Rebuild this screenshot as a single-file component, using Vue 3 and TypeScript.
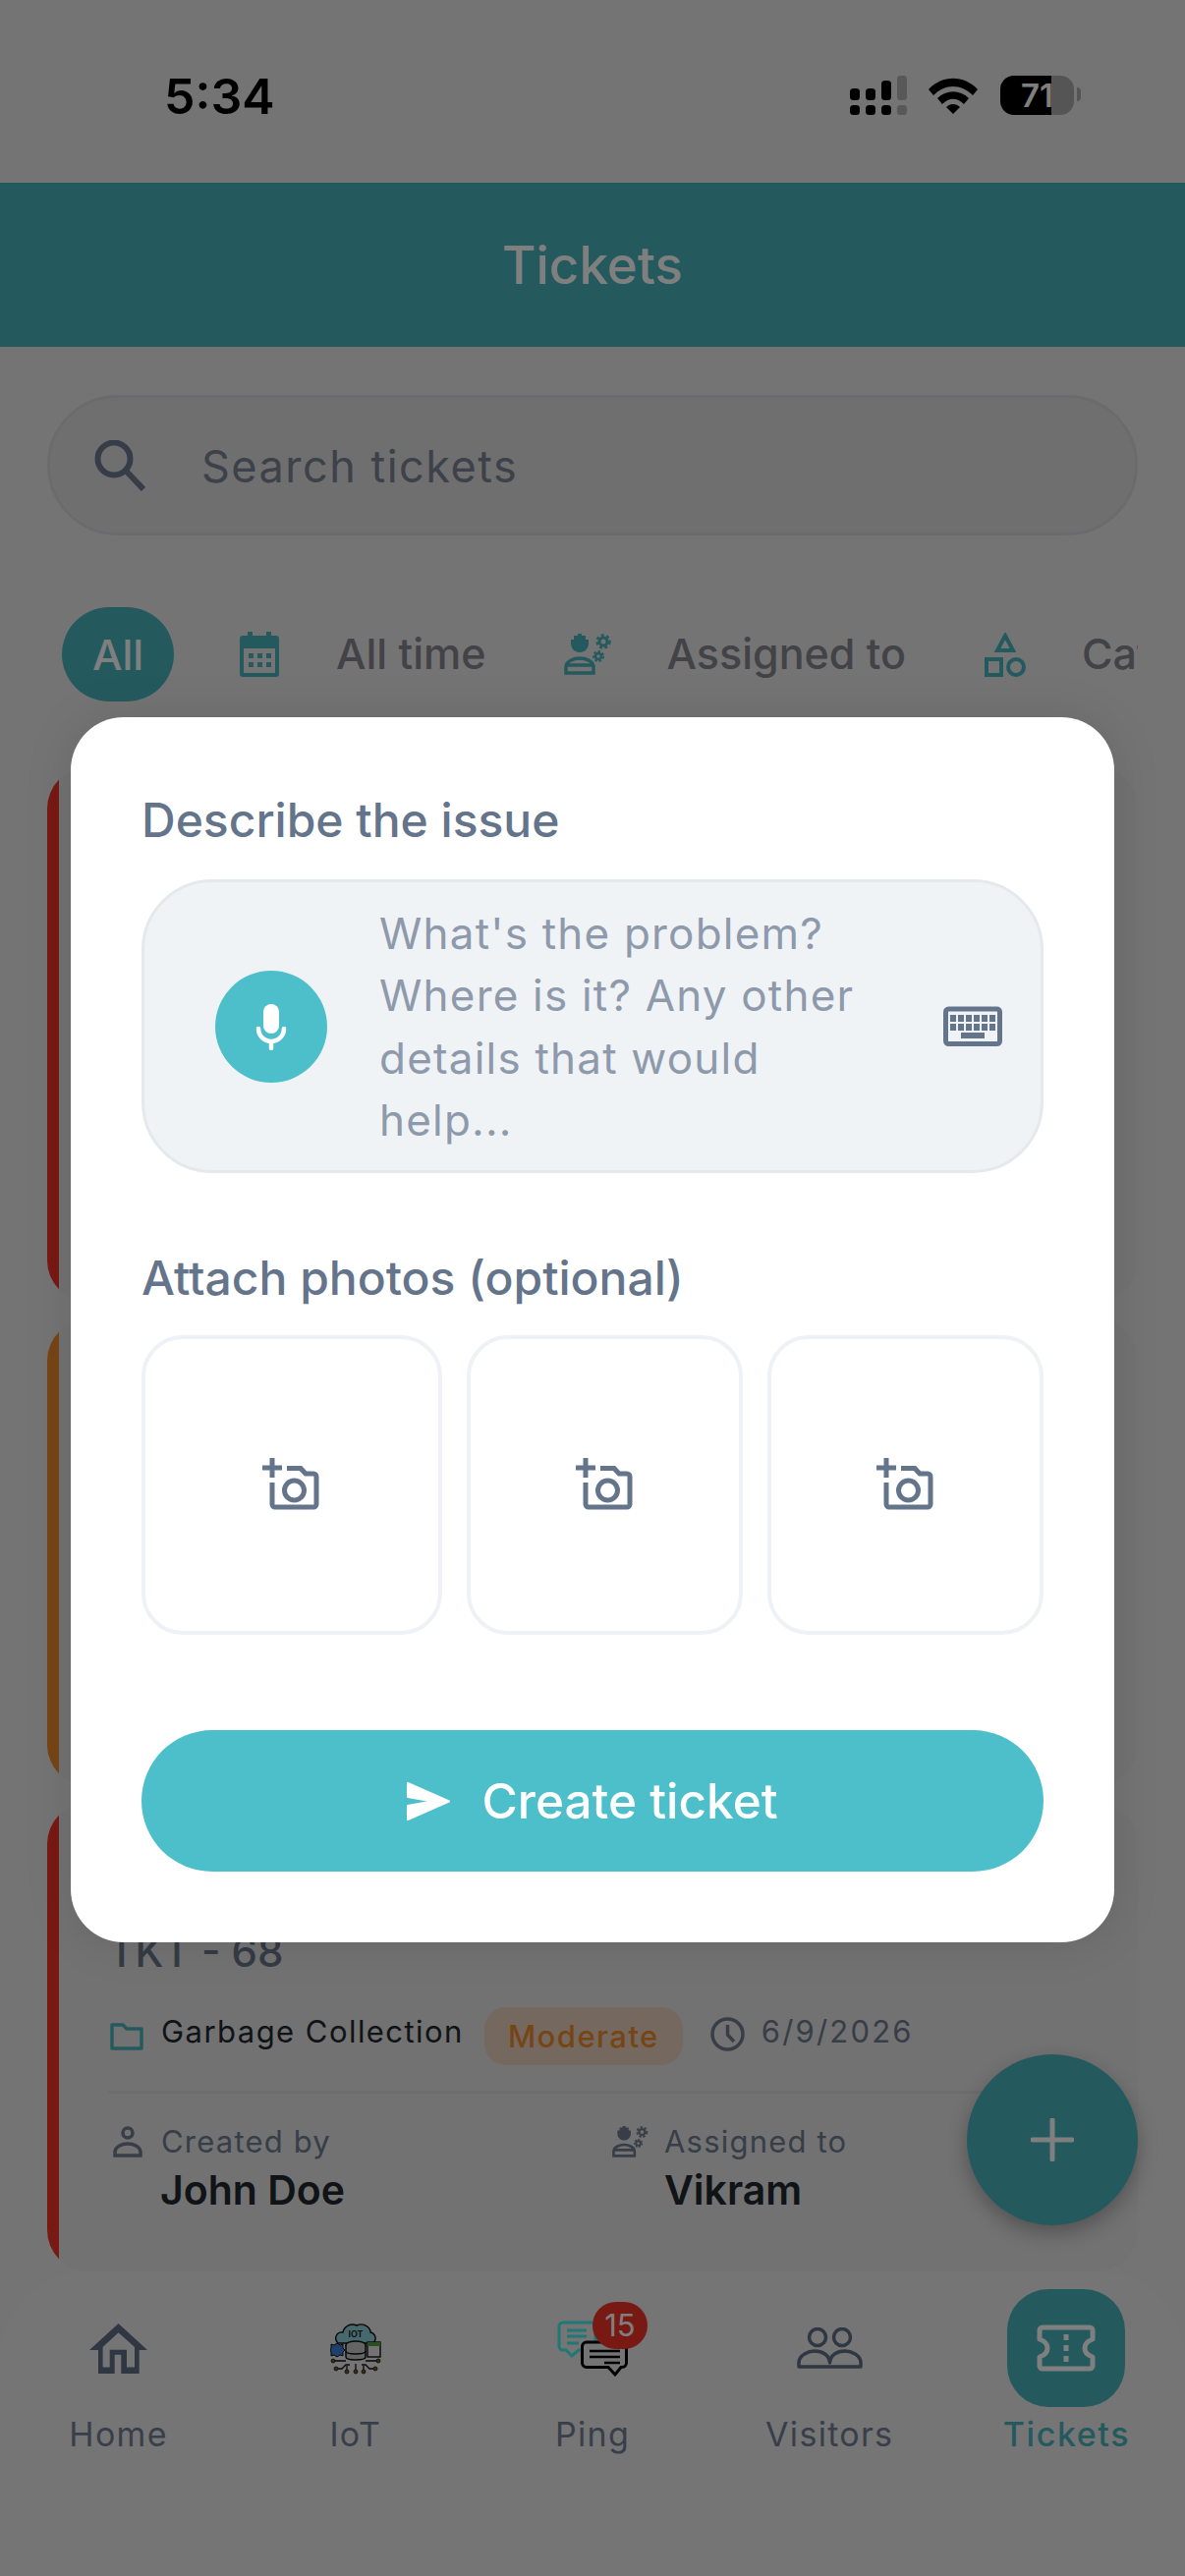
<script setup lang="ts">
const photoSlots = [1, 2, 3]

const navItems = [
  { key: 'home', label: 'Home' },
  { key: 'iot', label: 'IoT' },
  { key: 'ping', label: 'Ping' },
  { key: 'visitors', label: 'Visitors' },
  { key: 'tickets', label: 'Tickets' },
]
</script>

<template>
  <div class="page">
    <div class="status-bar">
      <span class="clock">5:34</span>
      <div class="status-icons">
        <svg width="58" height="40" viewBox="0 0 58 40">
          <rect x="0" y="13" width="10" height="12" rx="3.5" />
          <rect x="16" y="13" width="10" height="12" rx="3.5" />
          <rect x="32" y="5" width="10" height="20" rx="3.5" />
          <rect x="48" y="0" width="10" height="25" rx="3.5" fill="#b0b0b0" />
          <rect x="0" y="30" width="10" height="10" rx="3.5" />
          <rect x="16" y="30" width="10" height="10" rx="3.5" />
          <rect x="32" y="30" width="10" height="10" rx="3.5" />
          <rect x="48" y="30" width="10" height="10" rx="3.5" fill="#b0b0b0" />
        </svg>
        <svg width="50" height="37" viewBox="0 0 50 37">
          <path d="M0 12 C14 -3 36 -3 50 12 L45 18 C33 6 17 6 5 18 Z" />
          <path d="M9 21 C18 12 32 12 41 21 L36 27 C29 20 21 20 14 27 Z" />
          <path d="M18 30 C22 26 28 26 32 30 L25 37 Z" />
        </svg>
        <div class="battery">
          <span class="battery-level">71</span>
          <i class="battery-cap"></i>
        </div>
      </div>
    </div>

    <header class="app-header">Tickets</header>

    <div class="search">
      <svg width="52" height="52" viewBox="0 0 52 52" fill="none" stroke="#6f7b90" stroke-width="6">
        <circle cx="20" cy="19" r="16.5" />
        <path d="M32 31 L50 50" />
      </svg>
      <span class="search-text">Search tickets</span>
    </div>

    <div class="filters">
      <span class="chip-all">All</span>
      <div class="filter filter-time">
        <svg width="40" height="46" viewBox="0 0 40 46">
          <g fill="#48b4bc">
            <rect x="8" y="0" width="5" height="7" />
            <rect x="27" y="0" width="5" height="7" />
            <path fill-rule="evenodd" d="M3 4H37a3 3 0 0 1 3 3V43a3 3 0 0 1-3 3H3a3 3 0 0 1-3-3V7a3 3 0 0 1 3-3ZM4 17V42H36V17Z" />
            <rect x="9" y="22" width="5" height="5" />
            <rect x="18" y="22" width="5" height="5" />
            <rect x="27" y="22" width="5" height="5" />
            <rect x="9" y="31" width="5" height="5" />
            <rect x="18" y="31" width="5" height="5" />
            <rect x="27" y="31" width="5" height="5" />
          </g>
        </svg>
        <span>All time</span>
      </div>
      <div class="filter filter-assigned">
        <svg width="50" height="42" viewBox="0 0 50 42" fill="none" stroke="#48b4bc">
          <path d="M7 10 V6 L10 6 V2 H14 V0 H18 V2 H22 V6 H25 V10 C25 15 21 19 16 19 C11 19 7 15 7 10 Z" fill="#48b4bc" stroke="none" />
          <path d="M2 40 V34 C2 28 10 25 16 25 C22 25 30 28 30 34 V40 Z M2 32 H30" stroke-width="3.5" />
          <circle cx="40" cy="8" r="4" stroke-width="3" />
          <circle cx="40" cy="8" r="6.5" stroke-width="2.5" stroke-dasharray="3 2.5" />
          <circle cx="35" cy="23" r="3" stroke-width="2.5" />
          <circle cx="35" cy="23" r="5" stroke-width="2" stroke-dasharray="2.5 2" />
        </svg>
        <span>Assigned to</span>
      </div>
      <div class="filter filter-category">
        <svg width="42" height="45" viewBox="0 0 42 45" fill="none" stroke="#48b4bc" stroke-width="4">
          <path d="M21 3 L29 18 H13 Z" />
          <rect x="2" y="27" width="15" height="16" />
          <circle cx="32" cy="35" r="8" />
        </svg>
        <span>Category</span>
      </div>
    </div>

    <div class="ticket-list">
      <div class="ticket ticket-critical ticket-one"></div>
      <div class="ticket ticket-high ticket-two"></div>
      <div class="ticket ticket-critical ticket-three">
        <div class="ticket-id">TKT - 68</div>
        <div class="ticket-meta">
          <svg width="34" height="28" viewBox="0 0 34 28" fill="none" stroke="#48b4bc" stroke-width="3.5">
            <path d="M2 2 H13 L17 6 H32 V26 H2 Z" stroke-linejoin="round" />
          </svg>
          <span class="meta-text">Garbage Collection</span>
          <span class="severity">Moderate</span>
          <svg class="meta-clock" width="35" height="35" viewBox="0 0 35 35" fill="none" stroke="#6f7c90" stroke-width="3.5">
            <circle cx="17.5" cy="17.5" r="15.5" />
            <path d="M17.5 8 V18 L24 25" />
          </svg>
          <span class="meta-date">6/9/2026</span>
        </div>
        <div class="ticket-people">
          <div>
            <div class="person-label">
              <svg width="32" height="32" viewBox="0 0 32 32" fill="none" stroke="#6f7c90" stroke-width="3.5">
                <circle cx="16" cy="7" r="5" />
                <path d="M3 30 V27 C3 21 10 18 16 18 C22 18 29 21 29 27 V30 Z" />
              </svg>
              <span>Created by</span>
            </div>
            <div class="person-name">John Doe</div>
          </div>
          <div>
            <div class="person-label person-label-assigned">
              <svg width="38" height="34" viewBox="0 0 50 42" fill="none" stroke="#6f7c90">
                <path d="M7 10 V6 L10 6 V2 H14 V0 H18 V2 H22 V6 H25 V10 C25 15 21 19 16 19 C11 19 7 15 7 10 Z" fill="#6f7c90" stroke="none" />
                <path d="M2 40 V34 C2 28 10 25 16 25 C22 25 30 28 30 34 V40 Z M2 32 H30" stroke-width="3.5" />
                <circle cx="40" cy="8" r="4" stroke-width="3" />
                <circle cx="40" cy="8" r="6.5" stroke-width="2.5" stroke-dasharray="3 2.5" />
                <circle cx="35" cy="23" r="3" stroke-width="2.5" />
                <circle cx="35" cy="23" r="5" stroke-width="2" stroke-dasharray="2.5 2" />
              </svg>
              <span>Assigned to</span>
            </div>
            <div class="person-name">Vikram</div>
          </div>
        </div>
      </div>
    </div>

    <nav class="bottom-nav">
      <div v-for="item in navItems" :key="item.key" class="nav-item" :class="{ 'nav-active': item.key === 'tickets' }">
        <div class="nav-icon">
          <svg v-if="item.key === 'home'" width="59" height="51" viewBox="0 0 59 51">
            <path fill="#5f6e86" fill-rule="evenodd" d="M29.5 0 L59 27 H50.7 V51 H32.3 V31.7 H25.7 V51 H9 V27 H0 Z M29.5 9.3 L13.6 24 V44.4 H20.7 V26.7 H38 V44.4 H46 V24 Z" />
          </svg>

          <svg v-else-if="item.key === 'iot'" width="52" height="53" viewBox="0 0 52 53">
            <path d="M8 21 C3 16 7 9 13 10 C14 4 21 0 27 3 C33 0 41 4 41 10 C46 11 48 17 44 21 Z" fill="#8fd0da" stroke="#111" stroke-width="1.4" />
            <text x="26" y="15" text-anchor="middle" class="iot-label">IOT</text>
            <path d="M7 21 L10 23 L13 22 L13 26 L15 28 L13 30 L13 34 L10 33 L7 35 L4 33 L1 34 L1 30 L0 28 L1 26 L1 22 L4 23 Z" fill="#3f7fd8" stroke="#111" stroke-width="1" />
            <ellipse cx="26" cy="23" rx="10" ry="4" fill="#c9c9c9" stroke="#111" stroke-width="1.5" />
            <path d="M16 23 V35 C16 39 36 39 36 35 V23" fill="#c9c9c9" stroke="#111" stroke-width="1.5" />
            <path d="M16 29 C16 33 36 33 36 29" fill="none" stroke="#111" stroke-width="1.5" />
            <rect x="38" y="20" width="13" height="15" fill="#e6e6e6" stroke="#111" stroke-width="1.4" />
            <rect x="38" y="20" width="13" height="4" fill="#5b9a45" />
            <g fill="none" stroke="#111" stroke-width="1.3">
              <path d="M4 39 H16 M36 39 H48 M8 47 H12 L16 43 H20 M44 47 H40 L36 43 H32 M17 44 V48 M26 42 V48 M34 44 V48" />
            </g>
            <g fill="#7a5a20" stroke="#111" stroke-width="0.8">
              <circle cx="3" cy="39" r="2" />
              <circle cx="49" cy="39" r="2" />
              <circle cx="6" cy="47" r="2" />
              <circle cx="46" cy="47" r="2" />
              <circle cx="17" cy="50" r="2" />
              <circle cx="26" cy="50" r="2" />
              <circle cx="34" cy="50" r="2" />
            </g>
          </svg>

          <div v-else-if="item.key === 'ping'" class="ping-icon">
            <svg width="72" height="57" viewBox="0 0 72 57" fill="none">
              <path d="M6 2 H35 A4 4 0 0 1 39 6 V26 A4 4 0 0 1 35 30 H22 L15 36 L9 30 H6 A4 4 0 0 1 2 26 V6 A4 4 0 0 1 6 2 Z" stroke="#3cf0ea" stroke-width="3" />
              <path d="M10 10 H30 M10 16 H30 M10 23 H22" stroke="#3cf0ea" stroke-width="3" />
              <path d="M30 22 H66 A4.5 4.5 0 0 1 70.5 26.5 V43 A4.5 4.5 0 0 1 66 47.5 H65 L59 55 L52 47.5 H30 A4.5 4.5 0 0 1 25.5 43 V26.5 A4.5 4.5 0 0 1 30 22 Z" fill="#e8e8e8" stroke="#000" stroke-width="3" />
              <path d="M33 31 H64 M33 37 H64 M48 43 H64" stroke="#000" stroke-width="2.6" />
            </svg>
            <span class="ping-badge">15</span>
          </div>

          <svg v-else-if="item.key === 'visitors'" width="67" height="42" viewBox="0 0 67 42" fill="none" stroke="#5f6e86" stroke-width="3.5">
            <circle cx="21" cy="10" r="8.5" />
            <circle cx="46" cy="10" r="8.5" />
            <path d="M2 40 V36 C2 28 12 24 18 24 C26 24 33 28 33.5 36 C34 28 41 24 49 24 C55 24 65 28 65 36 V40 Z" stroke-linejoin="round" />
          </svg>

          <svg v-else width="60" height="48" viewBox="0 0 60 48" fill="none" stroke="#fff" stroke-width="5">
            <path d="M6 3 H54 A3 3 0 0 1 57 6 V15 C51 17 49 21 49 24 C49 27 51 31 57 33 V42 A3 3 0 0 1 54 45 H6 A3 3 0 0 1 3 42 V33 C9 31 11 27 11 24 C11 21 9 17 3 15 V6 A3 3 0 0 1 6 3 Z" stroke-linejoin="round" />
            <path d="M30 10 V16 M30 21 V27 M30 32 V38" stroke-width="5" />
          </svg>
        </div>
        <span class="nav-label">{{ item.label }}</span>
      </div>
    </nav>

    <button class="fab" type="button" aria-label="New ticket">
      <svg width="44" height="44" viewBox="0 0 44 44" stroke="#fff" stroke-width="5" stroke-linecap="round">
        <path d="M22 2 V42 M2 22 H42" />
      </svg>
    </button>

    <div class="scrim">
      <div class="sheet">
        <h2 class="sheet-title">Describe the issue</h2>
        <div class="describe-box">
          <span class="mic-btn">
            <svg width="34" height="50" viewBox="0 0 34 50" fill="none" stroke="#fff" stroke-width="4.5" stroke-linecap="round">
              <rect x="9" y="2" width="16" height="30" rx="8" fill="#fff" stroke="none" />
              <path d="M4 27 A13 13 0 0 0 30 27 M17 40 V47" />
            </svg>
          </span>
          <p class="describe-text">What's the problem? Where is it? Any other details that would help...</p>
          <svg class="keyboard" width="60" height="41" viewBox="0 0 60 41" fill="#64748b">
            <rect x="2.5" y="3" width="55" height="35.5" rx="3" fill="none" stroke="#64748b" stroke-width="5" />
            <rect x="7" y="9" width="6" height="7" />
            <rect x="15" y="9" width="6" height="7" />
            <rect x="23" y="9" width="6" height="7" />
            <rect x="31" y="9" width="6" height="7" />
            <rect x="39" y="9" width="6" height="7" />
            <rect x="47" y="9" width="6" height="7" />
            <rect x="7" y="18" width="6" height="7" />
            <rect x="15" y="18" width="6" height="7" />
            <rect x="23" y="18" width="6" height="7" />
            <rect x="31" y="18" width="6" height="7" />
            <rect x="39" y="18" width="6" height="7" />
            <rect x="47" y="18" width="6" height="7" />
            <rect x="18" y="27" width="24" height="6" />
          </svg>
        </div>

        <h2 class="sheet-title attach-title">Attach photos (optional)</h2>
        <div class="photo-grid">
          <div v-for="slot in photoSlots" :key="slot" class="photo-slot">
            <svg width="60" height="56" viewBox="0 0 60 56" fill="none" stroke="#64748b" stroke-width="5">
              <path d="M0 10 H20 M10 0 V20" />
              <path d="M25 10.5 H39 L44 16 H52 A3 3 0 0 1 55 19 V47 A3 3 0 0 1 52 50 H13 A3 3 0 0 1 10 47 V25" />
              <circle cx="32.5" cy="33" r="10" />
            </svg>
          </div>
        </div>

        <button class="create-btn" type="button">
          <svg width="44" height="39" viewBox="0 0 44 39" fill="#fff" stroke="#fff" stroke-width="2" stroke-linejoin="round">
            <path d="M1 1 L43 19.5 L1 38 V24 L26 19.5 L1 15 Z" />
          </svg>
          <span>Create ticket</span>
        </button>
      </div>
    </div>
  </div>
</template>

<style scoped>
.page {
  position: relative;
  display: flex;
  flex-direction: column;
  width: 1206px;
  height: 2622px;
  overflow: hidden;
  background: #e8e8e8;
  font-family: Inter, "Noto Sans", sans-serif;
}

.status-bar {
  display: flex;
  align-items: center;
  justify-content: space-between;
  height: 186px;
  padding: 8px 113px 0 167px;
  box-sizing: border-box;
  flex-shrink: 0;
}

.clock {
  margin-top: 2px;
  font-size: 50px;
  font-weight: 600;
  color: #000;
}

.status-icons {
  display: flex;
  align-items: center;
  gap: 22px;
}

.battery {
  position: relative;
  width: 75px;
  height: 40px;
  margin-left: 1px;
  border-radius: 14px;
  background: linear-gradient(90deg, #000 70%, #aaa 70%);
  color: #fff;
  font-size: 33px;
  font-weight: 600;
  line-height: 40px;
  text-align: center;
}

.battery-cap {
  position: absolute;
  top: 12px;
  right: -7px;
  width: 4px;
  height: 14px;
  border-radius: 0 4px 4px 0;
  background: #aaa;
}

.app-header {
  display: flex;
  align-items: center;
  justify-content: center;
  height: 167px;
  flex-shrink: 0;
  background: #48b4bc;
  color: #fff;
  font-size: 53px;
  font-weight: 500;
}

.search {
  display: flex;
  align-items: center;
  gap: 57px;
  height: 143px;
  margin: 49px 48px 0;
  padding-left: 45px;
  box-sizing: border-box;
  flex-shrink: 0;
  border: 3px solid #d6d7da;
  border-radius: 72px;
  background: #dedfe1;
  color: #7a8292;
  font-size: 45px;
  letter-spacing: 1.5px;
}

.search-text {
  margin-top: 2px;
}

.filters {
  display: flex;
  align-items: center;
  height: 96px;
  margin: 73px 48px 0 63px;
  overflow: hidden;
  flex-shrink: 0;
  white-space: nowrap;
  color: #84848f;
  font-size: 43px;
  font-weight: 500;
}

.chip-all {
  display: flex;
  align-items: center;
  justify-content: center;
  width: 114px;
  height: 96px;
  flex-shrink: 0;
  border-radius: 48px;
  background: #48b4bc;
  color: #fff;
}

.filter {
  display: flex;
  align-items: center;
  flex-shrink: 0;
}

.filter span {
  margin-bottom: 2px;
}

.filter-time {
  gap: 58px;
  margin-left: 67px;
}

.filter-assigned {
  gap: 55px;
  margin-left: 79px;
}

.filter-category {
  gap: 57px;
  margin-left: 80px;
}

.ticket-list {
  display: flex;
  flex-direction: column;
  gap: 17.5px;
  flex: 1;
  min-height: 0;
  margin: 67px 48px 0;
}

.ticket {
  flex-shrink: 0;
  box-sizing: border-box;
  border-radius: 42px;
}

.ticket-critical {
  background: linear-gradient(90deg, #f03228 12px, #e4e4e4 12px);
}

.ticket-high {
  background: linear-gradient(90deg, #ec8a2e 12px, #e4e4e4 12px);
}

.ticket-one {
  height: 544px;
}

.ticket-two {
  height: 475px;
}

.ticket-three {
  height: 477px;
  padding: 125px 0 0 62px;
}

.ticket-id {
  color: #6a7688;
  font-size: 42px;
  font-weight: 500;
  line-height: 54px;
}

.ticket-meta {
  display: flex;
  align-items: center;
  height: 59px;
  margin-top: 29px;
  margin-right: 150px;
  padding-left: 2px;
  color: #22282f;
  font-size: 31px;
  letter-spacing: 1.45px;
}

.meta-text {
  margin-left: 18px;
  margin-bottom: 10px;
}

.severity {
  margin-left: 21px;
  padding: 0 24px;
  height: 59px;
  border-radius: 22px;
  background: #ead0bf;
  color: #ea8a2c;
  line-height: 59px;
  font-weight: 500;
}

.meta-clock {
  margin-left: 28px;
  margin-bottom: 4px;
}

.meta-date {
  margin-left: 17px;
  margin-bottom: 10px;
  color: #6f7c90;
  letter-spacing: 2.2px;
}

.ticket-people {
  display: grid;
  grid-template-columns: 513px 1fr;
  margin-top: 26px;
  margin-right: 150px;
  padding-top: 28px;
  border-top: 3px solid #dadada;
}

.person-label {
  display: flex;
  align-items: center;
  gap: 18px;
  padding-left: 4px;
  color: #6f7c90;
  font-size: 31px;
  letter-spacing: 1.2px;
  line-height: 42px;
}

.person-label-assigned {
  gap: 15px;
  padding-left: 0;
}

.person-name {
  margin-top: 1px;
  padding-left: 53px;
  color: #22282f;
  font-size: 41px;
  font-weight: 600;
  line-height: 54px;
}

.bottom-nav {
  position: relative;
  display: flex;
  height: 310px;
  padding-top: 18px;
  box-sizing: border-box;
  flex-shrink: 0;
  border-radius: 90px 90px 0 0;
  background: #ebebeb;
}

.nav-item {
  display: flex;
  flex-direction: column;
  align-items: center;
  flex: 1;
}

.nav-icon {
  display: flex;
  align-items: center;
  justify-content: center;
  width: 120px;
  height: 120px;
  border-radius: 42px;
}

.nav-active .nav-icon {
  background: #48b4bc;
}

.nav-label {
  margin-top: 6px;
  color: #717f95;
  font-size: 34px;
  letter-spacing: 1.3px;
  line-height: 44px;
}

.nav-active .nav-label {
  color: #48b4bc;
  font-weight: 500;
  letter-spacing: 1.6px;
}

.iot-label {
  fill: #111;
  font-family: Inter, sans-serif;
  font-size: 9px;
  font-weight: 600;
}

.ping-icon {
  position: relative;
  display: flex;
}

.ping-badge {
  position: absolute;
  top: -19px;
  left: 36px;
  width: 56px;
  height: 48px;
  border-radius: 24px;
  background: #f03228;
  color: #fff;
  font-size: 31px;
  line-height: 48px;
  text-align: center;
}

.fab {
  position: absolute;
  top: 2091px;
  left: 984px;
  display: flex;
  align-items: center;
  justify-content: center;
  width: 174px;
  height: 174px;
  padding: 0;
  border: none;
  border-radius: 50%;
  background: #48b4bc;
  box-shadow: 0 8px 20px rgba(0, 0, 0, 0.28);
}

.scrim {
  position: absolute;
  inset: 0;
  background: rgba(0, 0, 0, 0.5);
}

.sheet {
  position: absolute;
  top: 730px;
  left: 72px;
  width: 1062px;
  padding: 72px;
  box-sizing: border-box;
  border-radius: 54px;
  background: #fff;
  box-shadow: 0 0 50px rgba(0, 0, 0, 0.1);
}

.sheet-title {
  margin: 0;
  color: #64748b;
  font-size: 48px;
  font-weight: 500;
  line-height: 66px;
}

.describe-box {
  display: flex;
  align-items: center;
  height: 299px;
  margin-top: 27px;
  padding: 0 39px 0 72px;
  box-sizing: border-box;
  border: 3px solid #e4e9ee;
  border-radius: 72px;
  background: #f0f3f6;
}

.mic-btn {
  display: flex;
  align-items: center;
  justify-content: center;
  width: 114px;
  height: 114px;
  flex-shrink: 0;
  border-radius: 50%;
  background: #4dbfcb;
}

.describe-text {
  flex: 1;
  margin: 2px 50px 0 53px;
  color: #8e9aac;
  font-size: 44px;
  letter-spacing: 1.2px;
  line-height: 63.5px;
}

.keyboard {
  flex-shrink: 0;
}

.attach-title {
  margin-top: 74px;
}

.photo-grid {
  display: grid;
  grid-template-columns: 306px 1fr 1fr;
  gap: 25px;
  margin-top: 25px;
}

.photo-slot {
  display: flex;
  align-items: center;
  justify-content: center;
  height: 305px;
  box-sizing: border-box;
  border: 4px solid #eef1f5;
  border-radius: 42px;
}

.create-btn {
  display: flex;
  align-items: center;
  justify-content: center;
  gap: 32px;
  width: 100%;
  height: 144px;
  margin-top: 97px;
  border: none;
  border-radius: 72px;
  background: #4dbfcb;
  color: #fff;
  font-family: Inter, sans-serif;
  font-size: 49.5px;
  font-weight: 500;
}
</style>
